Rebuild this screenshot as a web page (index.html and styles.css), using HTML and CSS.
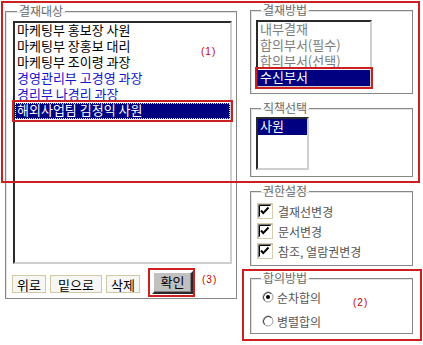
FILE: index.html
```html
<html>
    <head>
        <meta charset="utf-8">
        <title>결재선 지정</title>
        <link rel="stylesheet" href="styles.css">
    </head>
    <body>
        <div class="page">
            <div class="cols">
                <fieldset class="target">
                    <legend>결재대상</legend>
                    <div class="list people">
                        <div class="opt">마케팅부 홍보장 사원</div>
                        <div class="opt">마케팅부 장홍보 대리</div>
                        <div class="opt">마케팅부 조이령 과장</div>
                        <div class="opt blue">경영관리부 고경영 과장</div>
                        <div class="opt blue">경리부 나경리 과장</div>
                        <div class="opt sel focus">해외사업팀 김정익 사원</div>
                    </div>
                    <div class="btnrow">
                        <button class="btn up">위로</button>
                        <button class="btn down">밑으로</button>
                        <button class="btn del">삭제</button>
                        <button class="ok">확인</button>
                    </div>
                </fieldset>

                <div class="side">
                    <fieldset class="method">
                        <legend>결재방법</legend>
                        <div class="list kinds">
                            <div class="opt dim">내부결재</div>
                            <div class="opt dim">합의부서(필수)</div>
                            <div class="opt dim">합의부서(선택)</div>
                            <div class="opt sel">수신부서</div>
                        </div>
                    </fieldset>

                    <fieldset class="rank">
                        <legend>직책선택</legend>
                        <div class="list ranks">
                            <div class="opt sel">사원</div>
                        </div>
                    </fieldset>

                    <fieldset class="rights">
                        <legend>권한설정</legend>
                        <div class="chk">
                            <svg class="cb" width="16" height="16" viewBox="0 0 16 16"><rect x="0.5" y="0.5" width="15" height="15" fill="#fff" stroke="#d6cdb0"/><path d="M1.5 14.5V1.5h13" stroke="#7a7a7a" fill="none"/><path d="M2.5 13.5V2.5h11" stroke="#000" fill="none"/><path d="M4 7.5l2.2 2.6L11.5 4.5" stroke="#000" stroke-width="2" fill="none"/></svg>
                            <span>결재선변경</span>
                        </div>
                        <div class="chk">
                            <svg class="cb" width="16" height="16" viewBox="0 0 16 16"><rect x="0.5" y="0.5" width="15" height="15" fill="#fff" stroke="#d6cdb0"/><path d="M1.5 14.5V1.5h13" stroke="#7a7a7a" fill="none"/><path d="M2.5 13.5V2.5h11" stroke="#000" fill="none"/><path d="M4 7.5l2.2 2.6L11.5 4.5" stroke="#000" stroke-width="2" fill="none"/></svg>
                            <span>문서변경</span>
                        </div>
                        <div class="chk">
                            <svg class="cb" width="16" height="16" viewBox="0 0 16 16"><rect x="0.5" y="0.5" width="15" height="15" fill="#fff" stroke="#d6cdb0"/><path d="M1.5 14.5V1.5h13" stroke="#7a7a7a" fill="none"/><path d="M2.5 13.5V2.5h11" stroke="#000" fill="none"/><path d="M4 7.5l2.2 2.6L11.5 4.5" stroke="#000" stroke-width="2" fill="none"/></svg>
                            <span>참조, 열람권변경</span>
                        </div>
                    </fieldset>

                    <fieldset class="agree">
                        <legend>합의방법</legend>
                        <div class="rad">
                            <svg width="12" height="12" viewBox="0 0 12 12"><circle cx="6" cy="6" r="5" fill="#fff" stroke="#9c9c9c"/><path d="M2.5 9.5A5 5 0 0 1 9.5 2.5" stroke="#404040" fill="none"/><circle cx="6" cy="6" r="2" fill="#000"/></svg>
                            <span>순차합의</span>
                        </div>
                        <div class="rad">
                            <svg width="12" height="12" viewBox="0 0 12 12"><circle cx="6" cy="6" r="5" fill="#fff" stroke="#9c9c9c"/><path d="M2.5 9.5A5 5 0 0 1 9.5 2.5" stroke="#404040" fill="none"/></svg>
                            <span>병렬합의</span>
                        </div>
                    </fieldset>
                </div>
            </div>

            <!-- annotation marks laid over the form -->
            <div class="mark m-top"></div>
            <div class="mark m-row"></div>
            <div class="mark m-opt"></div>
            <div class="mark m-ok"></div>
            <div class="mark m-agree"></div>
            <span class="note n1">(1)</span>
            <span class="note n2">(2)</span>
            <span class="note n3">(3)</span>
        </div>
    </body>
</html>
```

FILE: styles.css
```css
body {
    margin: 0;
    background: #fff;
    font-family: "Noto Sans CJK KR", "Noto Sans", sans-serif;
    font-size: 12px;
}
.page {
    position: relative;
    width: 423px;
    height: 345px;
}
.cols {
    display: flex;
    align-items: flex-start;
    gap: 13px;
    padding-left: 5px;
}
fieldset {
    margin: 0;
    min-width: 0;
    box-sizing: border-box;
    border: 1px solid #878787;
    box-shadow: inset 1px 1px 0 #e2e2e2;
}
legend {
    height: 14px;
    line-height: 14px;
    padding: 0 2px;
    color: #6a6a6a;
    font-size: 12px;
}

/* listboxes */
.list {
    box-sizing: border-box;
    background: #fff;
    border: 2px solid;
    border-color: #2a2a2a #cfcfcf #cfcfcf #2a2a2a;
    overflow: hidden;
}
.opt {
    height: 16px;
    line-height: 14px;
    padding-left: 2px;
    white-space: nowrap;
    font-size: 13px;
    color: #000;
}
.opt.blue {
    color: #1414c8;
}
.opt.dim {
    color: #7c7c7c;
}
.opt.sel {
    background: #000080;
    color: #fff;
}
.opt.focus {
    outline: 1px dotted #e8e8a0;
    outline-offset: -1px;
}

/* left: 결재대상 */
.target {
    width: 232px;
    height: 295px;
    margin-top: 4px;
    padding: 3px 4px 4px 7px;
}
.target legend {
    margin-left: 4px;
}
.people {
    width: 219px;
    height: 243px;
}
.btnrow {
    display: flex;
    align-items: flex-end;
    margin: 7px 0 0 -1px;
    height: 23px;
}
.btn {
    height: 18px;
    box-sizing: border-box;
    margin: 0 4px 1px 0;
    padding: 0;
    border: 1px solid #d2c8a6;
    background: #f6f6f4;
    font-family: "Noto Sans CJK KR", sans-serif;
    font-size: 13px;
    line-height: 15px;
    color: #000;
}
.up { width: 34px; }
.down { width: 52px; }
.del { width: 34px; margin-right: 12px; }
.ok {
    width: 41px;
    height: 23px;
    box-sizing: border-box;
    padding: 0 0 3px;
    border: 2px solid;
    border-color: #fff #2a2a2a #2a2a2a #fff;
    box-shadow: inset -1px -1px 0 #808080;
    background: #c0c0c0;
    font-family: "Noto Sans CJK KR", sans-serif;
    font-size: 13px;
    line-height: 15px;
    color: #000;
}

/* right column */
.side {
    display: flex;
    flex-direction: column;
    width: 163px;
    padding-top: 3px;
}
.side fieldset {
    width: 163px;
    padding: 3px 4px 5px 5px;
}
.side legend {
    margin-left: 5px;
}
.kinds {
    width: 116px;
    height: 68px;
}
fieldset.rank {
    margin-top: 7px;
    padding-top: 2px;
    padding-bottom: 6px;
}
.ranks {
    width: 53px;
    height: 53px;
}
fieldset.rights {
    margin-top: 7px;
    padding-top: 5px;
    padding-bottom: 6px;
}
.chk {
    display: flex;
    align-items: center;
    gap: 5px;
    height: 16px;
    margin-bottom: 4px;
    margin-left: 1px;
    color: #555;
}
.chk:last-child {
    margin-bottom: 0;
}
.cb {
    flex: none;
}
fieldset.agree {
    margin-top: 5px;
    padding-top: 4px;
    padding-bottom: 4px;
}
.rad {
    display: flex;
    align-items: center;
    gap: 3px;
    height: 16px;
    margin-left: 6px;
    color: #555;
}
.rad + .rad {
    margin-top: 8px;
}

/* red annotation overlays */
.mark {
    position: absolute;
    box-sizing: border-box;
    border: 2px solid #cc2020;
}
.m-top { left: 1px; top: 1px; width: 419px; height: 182px; }
.m-row { left: 12px; top: 100px; width: 221px; height: 22px; }
.m-opt { left: 255px; top: 67px; width: 118px; height: 22px; }
.m-ok { left: 148px; top: 268px; width: 47px; height: 29px; }
.m-agree { left: 242px; top: 269px; width: 180px; height: 72px; }
.note {
    position: absolute;
    font-family: "Liberation Sans", sans-serif;
    font-size: 10px;
    letter-spacing: 1px;
    color: #c00000;
}
.n1 { left: 201px; top: 46px; }
.n2 { left: 353px; top: 297px; }
.n3 { left: 202px; top: 274px; }
```
